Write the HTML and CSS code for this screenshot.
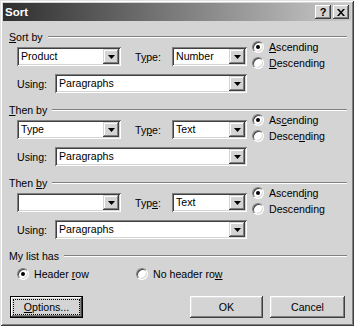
FILE: index.html
```html
<!DOCTYPE html>
<html lang="en">

<head>
    <meta charset="UTF-8">
    <title>Sort</title>
    <link rel="stylesheet" href="styles.css">
</head>

<body>
    <div class="window">
        <div class="titlebar">
            <span class="title">Sort</span>
            <div class="caption-buttons">
                <span class="cap-btn">?</span>
                <span class="cap-btn">
                    <svg width="8" height="7" viewBox="0 0 8 7"><path d="M0 0h2l2 2.5 2-2.5h2l-3 3.5 3 3.5h-2l-2-2.5-2 2.5h-2l3-3.5z" fill="#000"/></svg>
                </span>
            </div>
        </div>

        <div class="content">
            <div class="group">
                <div class="group-head"><span><u>S</u>ort by</span><span class="rule"></span></div>
                <div class="group-body">
                    <div class="fields">
                        <div class="row">
                            <div class="combo key"><span class="combo-text">Product</span><span class="drop"><svg width="7" height="4"><path d="M0 0h7l-3.5 4z" fill="#000"/></svg></span></div>
                            <span class="type-label">T<u>y</u>pe:</span>
                            <div class="combo type"><span class="combo-text">Number</span><span class="drop"><svg width="7" height="4"><path d="M0 0h7l-3.5 4z" fill="#000"/></svg></span></div>
                        </div>
                        <div class="row">
                            <span class="using-label">Using:</span>
                            <div class="combo wide"><span class="combo-text">Paragraphs</span><span class="drop"><svg width="7" height="4"><path d="M0 0h7l-3.5 4z" fill="#000"/></svg></span></div>
                        </div>
                    </div>
                    <div class="order">
                        <div class="radio-item"><span class="radio checked"></span><span><u>A</u>scending</span></div>
                        <div class="radio-item"><span class="radio"></span><span><u>D</u>escending</span></div>
                    </div>
                </div>
            </div>

            <div class="group">
                <div class="group-head"><span><u>T</u>hen by</span><span class="rule"></span></div>
                <div class="group-body">
                    <div class="fields">
                        <div class="row">
                            <div class="combo key"><span class="combo-text">Type</span><span class="drop"><svg width="7" height="4"><path d="M0 0h7l-3.5 4z" fill="#000"/></svg></span></div>
                            <span class="type-label">Ty<u>p</u>e:</span>
                            <div class="combo type"><span class="combo-text">Text</span><span class="drop"><svg width="7" height="4"><path d="M0 0h7l-3.5 4z" fill="#000"/></svg></span></div>
                        </div>
                        <div class="row">
                            <span class="using-label">Using:</span>
                            <div class="combo wide"><span class="combo-text">Paragraphs</span><span class="drop"><svg width="7" height="4"><path d="M0 0h7l-3.5 4z" fill="#000"/></svg></span></div>
                        </div>
                    </div>
                    <div class="order">
                        <div class="radio-item"><span class="radio checked"></span><span>As<u>c</u>ending</span></div>
                        <div class="radio-item"><span class="radio"></span><span>Desce<u>n</u>ding</span></div>
                    </div>
                </div>
            </div>

            <div class="group">
                <div class="group-head"><span>Then <u>b</u>y</span><span class="rule"></span></div>
                <div class="group-body">
                    <div class="fields">
                        <div class="row">
                            <div class="combo key"><span class="combo-text"></span><span class="drop"><svg width="7" height="4"><path d="M0 0h7l-3.5 4z" fill="#000"/></svg></span></div>
                            <span class="type-label">Typ<u>e</u>:</span>
                            <div class="combo type"><span class="combo-text">Text</span><span class="drop"><svg width="7" height="4"><path d="M0 0h7l-3.5 4z" fill="#000"/></svg></span></div>
                        </div>
                        <div class="row">
                            <span class="using-label">Using:</span>
                            <div class="combo wide"><span class="combo-text">Paragraphs</span><span class="drop"><svg width="7" height="4"><path d="M0 0h7l-3.5 4z" fill="#000"/></svg></span></div>
                        </div>
                    </div>
                    <div class="order">
                        <div class="radio-item"><span class="radio checked"></span><span>Ascend<u>i</u>ng</span></div>
                        <div class="radio-item"><span class="radio"></span><span>Descendin<u>g</u></span></div>
                    </div>
                </div>
            </div>

            <div class="list-section">
                <div class="group-head"><span>My list has</span><span class="rule"></span></div>
                <div class="list-options">
                    <div class="radio-item first"><span class="radio checked"></span><span>Header <u>r</u>ow</span></div>
                    <div class="radio-item"><span class="radio"></span><span>No header ro<u>w</u></span></div>
                </div>
            </div>

            <div class="buttons">
                <div class="btn default"><span class="focus"><span><u>O</u>ptions...</span></span></div>
                <div class="btn ok">OK</div>
                <div class="btn cancel">Cancel</div>
            </div>
        </div>
    </div>
</body>

</html>
```

FILE: styles.css
```css
body {
    margin: 0;
    font-family: "Liberation Sans", Arial, sans-serif;
    font-size: 10.6px;
    color: #000;
    background: #d4d4d4;
}

.window {
    width: 354px;
    height: 326px;
    box-sizing: border-box;
    padding: 3px;
    background: #d4d4d4;
    box-shadow: inset 1px 1px #e2e2e2, inset -1px -1px #404040, inset 2px 2px #fff, inset -2px -2px #808080;
}

.titlebar {
    height: 18px;
    display: flex;
    align-items: center;
    justify-content: space-between;
    padding: 0 2px;
    background: linear-gradient(to right, #2e2e2e, #cacaca);
}

.title {
    color: #fff;
    font-weight: bold;
    font-size: 11.5px;
}

.caption-buttons {
    display: flex;
    gap: 2px;
}

.cap-btn {
    width: 16px;
    height: 14px;
    box-sizing: border-box;
    display: flex;
    align-items: center;
    justify-content: center;
    background: #d4d4d4;
    font-weight: bold;
    font-size: 11px;
    box-shadow: inset -1px -1px #404040, inset 1px 1px #fff, inset -2px -2px #808080;
}

.content {
    padding: 9px 4px 0 6px;
}

.group {
    margin-bottom: 10px;
}

.group-head {
    display: flex;
    align-items: center;
    gap: 5px;
    height: 14px;
}

.rule {
    flex: 1;
    height: 0;
    border-top: 1px solid #808080;
    border-bottom: 1px solid #fff;
}

.group-body {
    display: flex;
}

.fields {
    display: flex;
    flex-direction: column;
    gap: 8px;
    padding: 3px 0 0 8px;
}

.row {
    display: flex;
    align-items: center;
    height: 19px;
}

.combo {
    display: flex;
    height: 19px;
    box-sizing: border-box;
    padding: 2px;
    background: #fff;
    box-shadow: inset 1px 1px #808080, inset -1px -1px #fff, inset 2px 2px #404040, inset -2px -2px #d4d4d4;
}

.combo-text {
    flex: 1;
    padding-left: 2px;
    line-height: 15px;
}

.drop {
    width: 16px;
    display: flex;
    align-items: center;
    justify-content: center;
    background: #d4d4d4;
    box-shadow: inset -1px -1px #404040, inset 1px 1px #d4d4d4, inset -2px -2px #808080, inset 2px 2px #fff;
}

.combo.key {
    width: 104px;
}

.type-label {
    width: 37px;
    margin-left: 14px;
}

.combo.type {
    width: 75px;
}

.using-label {
    width: 38px;
}

.combo.wide {
    width: 192px;
}

.order {
    margin: -5px 0 0 5px;
}

.radio-item {
    display: flex;
    align-items: center;
    gap: 5px;
    height: 16px;
}

.radio {
    width: 12px;
    height: 12px;
    box-sizing: border-box;
    position: relative;
    border-radius: 50%;
    background: #fff;
    border: 1px solid;
    border-color: #808080 #fff #fff #808080;
    box-shadow: inset 1px 1px #404040, inset -1px -1px #d4d4d4;
}

.radio.checked::after {
    content: "";
    position: absolute;
    left: 3px;
    top: 3px;
    width: 4px;
    height: 4px;
    border-radius: 50%;
    background: #000;
}

.list-options {
    display: flex;
    align-items: center;
    height: 14px;
    margin-top: 4px;
    padding-left: 8px;
}

.list-options .first {
    width: 119px;
}

.buttons {
    display: flex;
    margin-top: 15px;
    padding: 0 2px 0 1px;
}

.btn {
    width: 73px;
    height: 22px;
    box-sizing: border-box;
    display: flex;
    align-items: center;
    justify-content: center;
    background: #d4d4d4;
    box-shadow: inset -1px -1px #404040, inset 1px 1px #fff, inset -2px -2px #808080, inset 2px 2px #e0e0e0;
}

.btn.default {
    border: 1px solid #000;
    padding: 2px;
    box-shadow: inset -1px -1px #404040, inset 1px 1px #fff, inset -2px -2px #808080;
}

.focus {
    flex: 1;
    align-self: stretch;
    display: flex;
    align-items: center;
    justify-content: center;
    border: 1px dotted #000;
}

.btn.ok {
    margin-left: auto;
}

.btn.cancel {
    width: 75px;
    margin-left: 7px;
}
```
